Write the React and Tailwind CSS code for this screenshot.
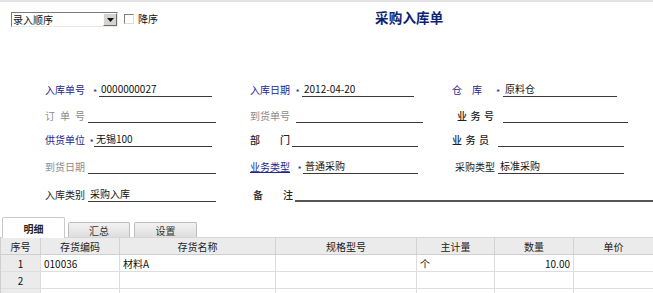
import React from "react"

const FONT = { fontFamily: '"Noto Sans CJK SC", "Noto Sans", "Liberation Sans", sans-serif' }

const BLUE = "text-[#22268f]"
const GRAY = "text-[#8c8c8c]"
const DARK = "text-[#222]"

// spaced label such as "业 务 号": characters spread across a fixed width
const Spread = ({ chars, width, className }) => (
  <span className={`flex justify-between ${className}`} style={{ width }}>
    {chars.map((c, i) => (
      <span key={i}>{c}</span>
    ))}
  </span>
)

const Star = ({ w }) => (
  <span className={`${w} text-[9px] leading-[12px] text-[#2a2a9a] text-center pb-[1px] translate-y-[3px]`}>*</span>
)

const Line = ({ w, value, children }) => (
  <div className={`${w} h-[14px] border-b border-[#3a3a3a] leading-[12px] text-[10px] text-[#111] pl-[2px] whitespace-nowrap`}>
    {value}
    {children}
  </div>
)

const Label = ({ w, className, children }) => (
  <div className={`${w} flex leading-[12px] pb-[1px] ${className}`}>{children}</div>
)

const columns = [
  { title: "序号", w: "w-[40px]" },
  { title: "存货编码", w: "w-[79px]" },
  { title: "存货名称", w: "w-[156px]" },
  { title: "规格型号", w: "w-[141px]" },
  { title: "主计量", w: "w-[78px]" },
  { title: "数量", w: "w-[79px]" },
  { title: "单价", w: "w-[80px]" },
]

const rows = [
  ["1", "010036", "材料A", "", "个", "10.00", ""],
  ["2", "", "", "", "", "", ""],
  ["", "", "", "", "", "", ""],
]

export default function App() {
  return (
    <div className="w-[653px] h-[293px] overflow-hidden bg-white text-[10px] border-t-2 border-[#e2e2e2]" style={FONT}>
      {/* top bar */}
      <div className="flex items-start pt-[10px] pl-[11px] h-[25px]">
        <div className="w-[107px] h-[15px] flex border border-t-[#7a7a7a] border-l-[#7a7a7a] border-b-[#e8e8e8] border-r-[#e8e8e8] bg-white">
          <div className="flex-1 leading-[13px] pl-[1px] text-[10px] text-[#111]">录入顺序</div>
          <div className="w-[14px] h-[13px] bg-[#d6d3ce] border border-t-[#fafafa] border-l-[#fafafa] border-b-[#6e6e6e] border-r-[#6e6e6e] flex items-center justify-center">
            <svg width="7" height="4" viewBox="0 0 7 4">
              <path d="M0 0h7L3.5 4z" fill="#111" />
            </svg>
          </div>
        </div>
        <div className="ml-[6px] mt-[2px] w-[10px] h-[10px] border border-t-[#808080] border-l-[#808080] border-b-[#dedede] border-r-[#dedede] bg-white" />
        <div className="ml-[4px] leading-[14px] text-[10px] text-[#111]">降序</div>
        <div className="ml-[217px] -mt-[5px] text-[13.5px] font-bold text-[#0c2472] tracking-[0.2px]">采购入库单</div>
      </div>

      {/* form */}
      <div className="mt-[54px]">
        {/* row 1 */}
        <div className="flex items-end h-[16px]">
          <div className="w-[245px] pl-[45px] flex items-end">
            <Label w="w-[46px]" className={BLUE}>入库单号</Label>
            <Star w="w-[8px]" />
            <Line w="w-[113px]" value="0000000027" />
          </div>
          <div className="w-[207px] pl-[5px] flex items-end">
            <Label w="w-[43px]" className={BLUE}>入库日期</Label>
            <Star w="w-[9px]" />
            <Line w="w-[112px]" value="2012-04-20" />
          </div>
          <div className="flex items-end">
            <Label w="w-[41px]" className={BLUE}>
              <Spread chars={["仓", "库"]} width={30} />
            </Label>
            <Star w="w-[10px]" />
            <Line w="w-[114px]" value="原料仓" />
          </div>
        </div>

        {/* row 2 */}
        <div className="flex items-end h-[26px]">
          <div className="w-[245px] pl-[45px] flex items-end">
            <Label w="w-[43px]" className={GRAY}>
              <Spread chars={["订", "单", "号"]} width={40} />
            </Label>
            <Line w="w-[128px]" />
          </div>
          <div className="w-[207px] pl-[5px] flex items-end">
            <Label w="w-[46px]" className={GRAY}>到货单号</Label>
            <Line w="w-[127px]" />
          </div>
          <div className="pl-[5px] flex items-end">
            <Label w="w-[46px]" className={`${DARK} font-medium`}>
              <Spread chars={["业", "务", "号"]} width={37} />
            </Label>
            <Line w="w-[125px]" />
          </div>
        </div>

        {/* row 3 */}
        <div className="flex items-end h-[24px]">
          <div className="w-[245px] pl-[45px] flex items-end">
            <Label w="w-[44px]" className={BLUE}>供货单位</Label>
            <Star w="w-[5px]" />
            <Line w="w-[118px]" value="无锡100" />
          </div>
          <div className="w-[207px] pl-[5px] flex items-end">
            <Label w="w-[42px]" className={`${DARK} font-medium`}>
              <Spread chars={["部", "门"]} width={40} />
            </Label>
            <Line w="w-[126px]" />
          </div>
          <div className="flex items-end">
            <Label w="w-[46px]" className={`${DARK} font-medium`}>
              <Spread chars={["业", "务", "员"]} width={37} />
            </Label>
            <Line w="w-[126px]" />
          </div>
        </div>

        {/* row 4 */}
        <div className="flex items-end h-[27px]">
          <div className="w-[245px] pl-[45px] flex items-end">
            <Label w="w-[43px]" className={GRAY}>到货日期</Label>
            <Line w="w-[128px]" />
          </div>
          <div className="w-[207px] pl-[5px] flex items-end">
            <Label w="w-[46px]" className={BLUE}>
              <span className="underline underline-offset-[1px]">业务类型</span>
            </Label>
            <Star w="w-[7px]" />
            <Line w="w-[115px]" value="普通采购" />
          </div>
          <div className="pl-[3px] flex items-end">
            <Label w="w-[43px]" className={DARK}>采购类型</Label>
            <Line w="w-[126px]" value="标准采购" />
          </div>
        </div>

        {/* row 5 */}
        <div className="flex items-end h-[28px]">
          <div className="w-[245px] pl-[45px] flex items-end">
            <Label w="w-[43px]" className={DARK}>入库类别</Label>
            <Line w="w-[128px]" value="采购入库" />
          </div>
          <div className="flex-1 pl-[8px] flex items-end">
            <Label w="w-[42px]" className={`${DARK} font-medium`}>
              <Spread chars={["备", "注"]} width={40} />
            </Label>
            <div className="flex-1 h-[14px] border-b-2 border-[#555]" />
          </div>
        </div>
      </div>

      {/* tabs */}
      <div className="mt-[15px] h-[21px] flex items-end pl-[2px] border-b border-[#d6d6d6]">
        <div className="w-[63px] h-[21px] -mb-px bg-white border border-b-0 border-[#c9c9c9] rounded-t-[2px] flex items-center justify-center font-bold text-[10px] text-[#222]">
          明细
        </div>
        <div className="ml-[3px] w-[62px] h-[15px] bg-gradient-to-b from-[#f2f2f2] to-[#dedede] border border-b-0 border-[#bdbdbd] rounded-t-[2px] flex items-center justify-center text-[10px] text-[#333]">
          汇总
        </div>
        <div className="ml-[4px] w-[63px] h-[15px] bg-gradient-to-b from-[#f2f2f2] to-[#dedede] border border-b-0 border-[#bdbdbd] rounded-t-[2px] flex items-center justify-center text-[10px] text-[#333]">
          设置
        </div>
      </div>

      {/* grid */}
      <div className="border-l border-[#cfcfcf]">
        <div className="flex h-[17px] bg-[#ebebeb] border-b border-[#cfcfcf]">
          {columns.map((c) => (
            <div key={c.title} className={`${c.w} shrink-0 border-r border-[#d2d2d2] flex items-center justify-center text-[10px] text-[#222]`}>
              {c.title}
            </div>
          ))}
        </div>
        {rows.map((r, ri) => (
          <div key={ri} className="flex h-[17px] border-b border-[#dedede]">
            {r.map((v, ci) => (
              <div
                key={ci}
                className={`${columns[ci].w} shrink-0 border-r border-[#dcdcdc] flex items-center text-[10px] text-[#111] ${
                  ci === 0 ? "justify-center bg-[#ebebeb]" : ci === 5 ? "justify-end pr-[3px]" : "pl-[3px]"
                }`}
              >
                {v}
              </div>
            ))}
          </div>
        ))}
      </div>
    </div>
  )
}
